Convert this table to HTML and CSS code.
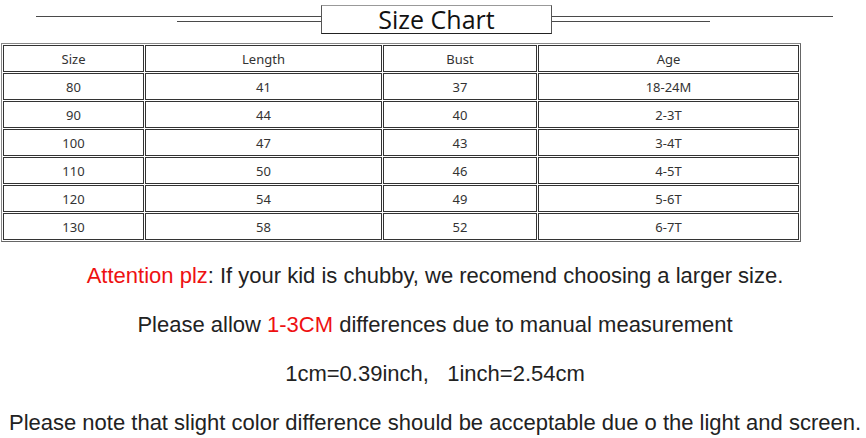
FILE: index.html
```html
<!DOCTYPE html>
<html>
<head>
<meta charset="utf-8">
<link rel="stylesheet" href="styles.css">
</head>
<body>
<div class="page">
  <div class="title-bar">
    <div class="rule rule-left">
      <div class="line line-top"></div>
      <div class="line line-bottom"></div>
    </div>
    <div class="title-box">Size Chart</div>
    <div class="rule rule-right">
      <div class="line line-top"></div>
      <div class="line line-bottom"></div>
    </div>
  </div>

  <table class="chart">
    <colgroup>
      <col class="c1"><col class="c2"><col class="c3"><col class="c4">
    </colgroup>
    <tr><td>Size</td><td>Length</td><td>Bust</td><td>Age</td></tr>
    <tr><td>80</td><td>41</td><td>37</td><td>18-24M</td></tr>
    <tr><td>90</td><td>44</td><td>40</td><td>2-3T</td></tr>
    <tr><td>100</td><td>47</td><td>43</td><td>3-4T</td></tr>
    <tr><td>110</td><td>50</td><td>46</td><td>4-5T</td></tr>
    <tr><td>120</td><td>54</td><td>49</td><td>5-6T</td></tr>
    <tr><td>130</td><td>58</td><td>52</td><td>6-7T</td></tr>
  </table>

  <div class="notes">
    <p><span class="red">Attention plz</span>: If your kid is chubby, we recomend choosing a larger size.</p>
    <p>Please allow <span class="red">1-3CM</span> differences due to manual measurement</p>
    <p>1cm=0.39inch,&nbsp;&nbsp;&nbsp;1inch=2.54cm</p>
    <p>Please note that slight color difference should be acceptable due o the light and screen.</p>
  </div>
</div>
</body>
</html>
```

FILE: styles.css
```css
html, body {
  margin: 0;
  padding: 0;
  background: #ffffff;
}

.page {
  width: 866px;
  height: 438px;
  overflow: hidden;
}

.title-bar {
  display: flex;
  align-items: flex-start;
  padding-left: 36px;
  padding-top: 5px;
  height: 43px;
  box-sizing: border-box;
}

.rule {
  display: flex;
  flex-direction: column;
  padding-top: 11px;
}

.rule-left {
  width: 285px;
  align-items: flex-end;
}

.rule-right {
  width: 281px;
  align-items: flex-start;
}

.line {
  height: 1px;
  background: #4a4a4a;
}

.line-top {
  width: 100%;
}

.line-bottom {
  margin-top: 4px;
}

.rule-left .line-bottom {
  width: 144px;
}

.rule-right .line-bottom {
  width: 158px;
}

.title-box {
  width: 231px;
  height: 29px;
  box-sizing: border-box;
  border: 1px solid #555;
  border-top-color: #999;
  border-bottom-color: #222;
  background: #fff;
  font-family: "Open Sans", "Noto Sans", sans-serif;
  font-size: 25px;
  line-height: 27px;
  color: #111;
  text-align: center;
}

.chart {
  margin-left: 1px;
  border: 1px solid #666;
  border-top-color: #888;
  border-left-color: #888;
  border-spacing: 1px;
  border-collapse: separate;
  table-layout: fixed;
  width: 800px;
}

.c1 { width: 141px; }
.c2 { width: 237px; }
.c3 { width: 154px; }
.c4 { width: 261px; }

.chart td {
  border: 1px solid #333;
  height: 25px;
  padding: 0;
  text-align: center;
  vertical-align: middle;
  font-family: "Noto Sans", "Open Sans", sans-serif;
  font-size: 13px;
  color: #333;
}

.notes {
  padding-top: 21px;
  padding-left: 4px;
  font-family: "Liberation Sans", Arial, sans-serif;
  font-size: 22px;
  color: #222;
  text-align: center;
}

.notes p {
  margin: 0;
  height: 49px;
  line-height: 26px;
  white-space: nowrap;
}

.red {
  color: #ee1111;
}
```
